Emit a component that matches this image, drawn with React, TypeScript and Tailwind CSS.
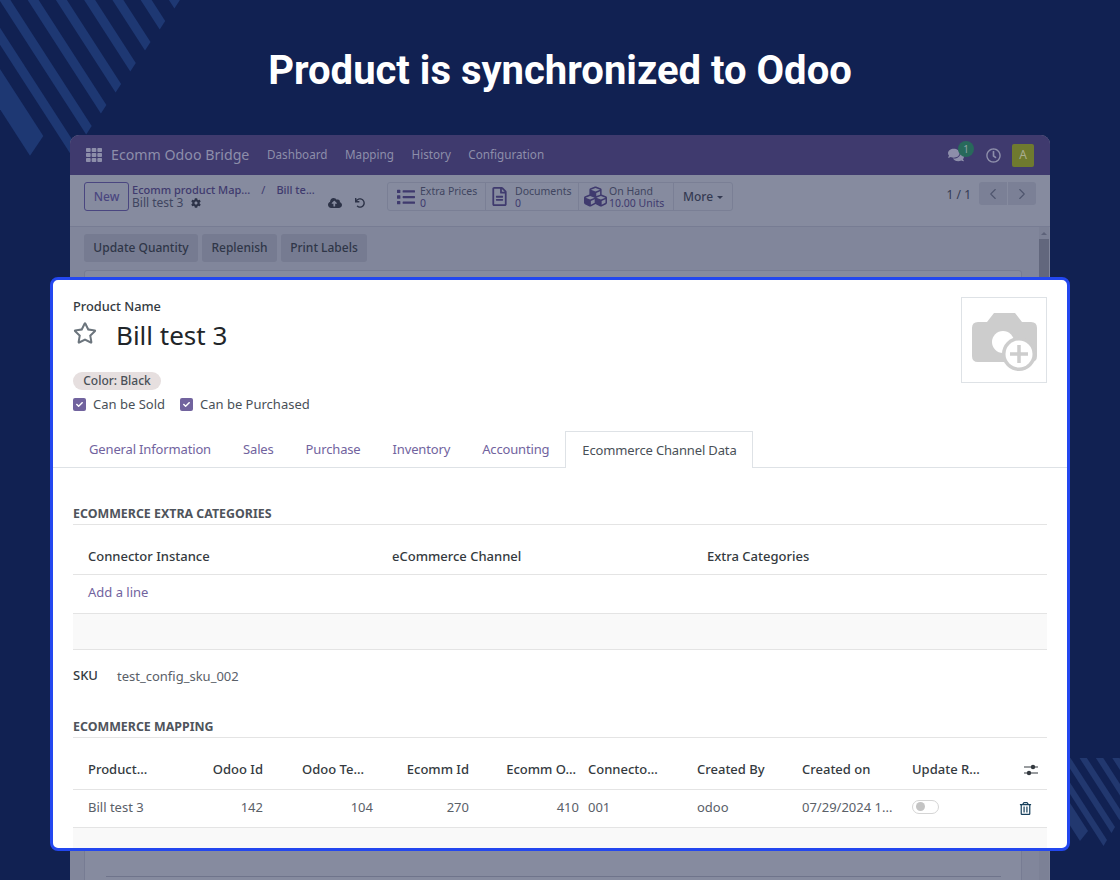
import { ChevronLeft, ChevronRight } from "lucide-react";
import {
  FaCheck,
  FaCloudUploadAlt,
  FaCog,
  FaComments,
  FaCubes,
  FaList,
  FaRegClock,
  FaRegFileAlt,
  FaRegStar,
  FaRegTrashAlt,
  FaTh,
  FaUndo,
} from "react-icons/fa";

const navLinks = ["Dashboard", "Mapping", "History", "Configuration"];
const tabs = ["General Information", "Sales", "Purchase", "Inventory", "Accounting"];

const mappingCols = "grid grid-cols-[95px_95px_110px_96px_110px_118px_105px_110px_100px_35px]";

function stripe(tx: number, ty: number, cx: number, cy: number, len: number) {
  const ux = -len;
  const uy = -len * 1.55;
  return `${tx},${ty} ${tx + cx},${ty + cy} ${tx + cx + ux},${ty + cy + uy} ${tx + ux},${ty + uy}`;
}

function Stripes() {
  const top = [0, 1, 2, 3, 4, 5, 6, 7];
  const low = [0, 1, 2, 3, 4, 5, 6];
  return (
    <>
      <svg className="absolute left-0 top-0" width="190" height="165">
        <g fill="#1e3873">
          {top.map((k) => (
            <polygon key={k} points={stripe(77 + 14.7 * k, 147 - 21 * k, -5.5, 8.5, 110)} />
          ))}
          <polygon points={stripe(43.3, 136, -13.3, 19.7, 110)} />
        </g>
      </svg>
      <svg className="absolute left-[1050px] top-[758px]" width="70" height="90">
        <g fill="#22386f">
          {low.map((k) => (
            <polygon key={k} points={stripe(57 + 8 * k, 82 - 13 * k, -3.5, 6, 100)} />
          ))}
          <polygon points={stripe(38, 73, -8, 10, 100)} />
        </g>
      </svg>
    </>
  );
}

function StatButton({ icon, label, value, cell }: { icon: React.ReactNode; label: string; value: string; cell: string }) {
  return (
    <div className={`flex h-full items-center border-r border-[#7a7f95] ${cell}`}>
      <span className="text-[#3f3a6e]">{icon}</span>
      <div className="text-[10.5px] leading-[12px] text-[#3f4560]">
        <div>{label}</div>
        <div className="text-[#3f3a6e]">{value}</div>
      </div>
    </div>
  );
}

function BackWindow() {
  return (
    <div className="ml-[70px] flex h-[745px] w-[980px] flex-col overflow-hidden rounded-t-[9px] bg-[#81869b]">
      <div className="flex h-[40px] shrink-0 items-center bg-[#3f3a6e] pl-[16px] pr-[16px] text-[#8d8eaa]">
        <FaTh size={16} />
        <span className="ml-[9px] w-[156px] whitespace-nowrap text-[14.2px]">Ecomm Odoo Bridge</span>
        <div className="flex gap-[17.5px] text-[11.7px]">
          {navLinks.map((l) => (
            <span key={l}>{l}</span>
          ))}
        </div>
        <div className="ml-auto flex items-center">
          <div className="relative mr-[22px]">
            <FaComments size={16} />
            <span className="absolute -top-[6px] left-[10px] flex h-[16px] w-[16px] items-center justify-center rounded-full bg-[#28695b] text-[10px] text-[#8fa3a8]">
              1
            </span>
          </div>
          <FaRegClock size={15} className="mr-[11px]" />
          <span className="flex h-[23px] w-[22px] items-center justify-center rounded-[2px] bg-[#6f7a2f] text-[12px] text-[#a9ad8f]">A</span>
        </div>
      </div>

      <div className="flex h-[52px] shrink-0 items-start border-b border-[#777c93] bg-[#868b9f] pl-[14px] pr-[14px] pt-[7px]">
        <div className="flex h-[29px] w-[45px] items-center justify-center rounded-[3px] border border-[#4a4680] text-[12px] font-medium text-[#4a4680]">New</div>
        <div className="ml-[3px] w-[196px] whitespace-nowrap pt-[1px] text-[11px] leading-[13px]">
          <div className="font-medium text-[#3f3a6e]">
            Ecomm product Map...<span className="mx-[11px] font-normal">/</span>Bill te...
          </div>
          <div className="flex items-center text-[12px] text-[#3f4560]">
            Bill test 3 <FaCog size={10} className="ml-[8px] text-[#2d3348]" />
          </div>
        </div>
        <div className="mt-[14px] flex items-center gap-[13px] text-[#2d3348]">
          <FaCloudUploadAlt size={14} />
          <FaUndo size={10} />
        </div>
        <div className="ml-[22px] flex h-[29px] w-[346px] items-center rounded-[3px] border border-[#7a7f95]">
          <StatButton icon={<FaList size={18} />} label="Extra Prices" value="0" cell="w-[98px] gap-[5px] pl-[9px]" />
          <StatButton icon={<FaRegFileAlt size={19} />} label="Documents" value="0" cell="w-[93px] gap-[6px] pl-[4px]" />
          <StatButton icon={<FaCubes size={23} />} label="On Hand" value="10.00 Units" cell="w-[95px] gap-[2px] pl-[5px]" />
          <div className="flex flex-1 items-center justify-center gap-[4px] text-[12px] font-medium text-[#343a52]">
            More <span className="mt-[2px] border-x-[3px] border-t-[3px] border-x-transparent border-t-[#343a52]" />
          </div>
        </div>
        <span className="ml-auto mt-[4px] text-[12px] text-[#343a52]">1 / 1</span>
        <div className="ml-[8px] flex h-[23px] gap-[1px]">
          <span className="flex w-[28px] items-center justify-center rounded-l-[3px] bg-[#7b8096] text-[#4f556e]">
            <ChevronLeft size={18} strokeWidth={1.5} />
          </span>
          <span className="flex w-[28px] items-center justify-center rounded-r-[3px] bg-[#7b8096] text-[#4f556e]">
            <ChevronRight size={18} strokeWidth={1.5} />
          </span>
        </div>
      </div>

      <div className="relative flex-1">
        <div className="ml-[14px] mt-[7px] flex gap-[4px] text-[12px] font-medium text-[#2f3648]">
          <span className="flex h-[28px] w-[114px] items-center justify-center rounded-[3px] bg-[#767b91]">Update Quantity</span>
          <span className="flex h-[28px] w-[75px] items-center justify-center rounded-[3px] bg-[#767b91]">Replenish</span>
          <span className="flex h-[28px] w-[86px] items-center justify-center rounded-[3px] bg-[#767b91]">Print Labels</span>
        </div>
        <div className="ml-[14px] mt-[8px] h-[640px] w-[938px] rounded-t-[3px] border border-[#777c93] bg-[#868b9f] pt-[605px]">
          <div className="ml-[21px] h-px w-[895px] bg-[#6f748b]" />
        </div>
        <div className="absolute bottom-0 right-[1px] top-0 w-[10px] bg-[#7c8196]">
          <div className="mx-auto mt-[5px] h-0 w-0 border-x-[3px] border-b-[3px] border-x-transparent border-b-[#5d6279]" />
          <div className="mt-[4px] h-[100px] bg-[#62677d]" />
        </div>
      </div>
    </div>
  );
}

function CameraIcon() {
  return (
    <svg width="84" height="84" viewBox="1 1 84 84">
      <path d="M26 25 L33 16 H54 L61 25 H70 Q76 25 76 31 V59 Q76 65 70 65 H17 Q11 65 11 59 V31 Q11 25 17 25 Z" fill="#cdcdcd" />
      <circle cx="42" cy="45" r="11" fill="#fff" />
      <circle cx="58" cy="57" r="17" fill="#cdcdcd" />
      <circle cx="58" cy="57" r="13.5" fill="#fff" />
      <path d="M58 48 V66 M49 57 H67" stroke="#cdcdcd" strokeWidth="3.5" />
    </svg>
  );
}

function AdjustIcon() {
  return (
    <svg width="14" height="12" viewBox="0 0 14 12" fill="#343a40">
      <rect x="0" y="2.5" width="14" height="1" />
      <rect x="0" y="8.5" width="14" height="1" />
      <circle cx="9" cy="3" r="2.2" />
      <circle cx="5" cy="9" r="2.2" />
    </svg>
  );
}

function Checkbox({ label }: { label: string }) {
  return (
    <div className="flex items-center gap-[7px]">
      <span className="flex h-[13px] w-[13px] items-center justify-center rounded-[2px] bg-[#71639e] text-white">
        <FaCheck size={7} />
      </span>
      <span className="text-[13px] text-[#495057]">{label}</span>
    </div>
  );
}

function SectionTitle({ children }: { children: string }) {
  return <div className="border-b border-[#e4e4e4] pb-[2px] text-[12.4px] font-bold leading-[16px] text-[#4f545c]">{children}</div>;
}

function Card() {
  return (
    <div className="absolute left-[50px] top-[277px] h-[574px] w-[1020px] overflow-hidden rounded-[8px] border-[3px] border-[#2347ef] bg-white">
      <div className="relative h-[151px] px-[20px] pt-[18px]">
        <div className="text-[12.8px] font-medium leading-[17px] text-[#343a40]">Product Name</div>
        <div className="flex items-center">
          <FaRegStar size={24} className="-mt-[2px] text-[#6c757d]" />
          <span className="ml-[19px] pt-[2px] text-[26px] leading-[36px] text-[#212529]">Bill test 3</span>
        </div>
        <div className="mt-[19px] flex h-[18px] w-[88px] items-center justify-center rounded-full bg-[#e6dfdf] text-[12px] font-medium text-[#495057]">Color: Black</div>
        <div className="mt-[5px] flex gap-[15px]">
          <Checkbox label="Can be Sold" />
          <Checkbox label="Can be Purchased" />
        </div>
        <div className="absolute right-[20px] top-[17px] flex h-[86px] w-[86px] items-center justify-center border border-[#dee2e6]">
          <CameraIcon />
        </div>
      </div>

      <div className="flex h-[37px] border-b border-[#dee2e6] pl-[20px] text-[13px] tracking-[-0.15px] text-[#71639e]">
        {tabs.map((t) => (
          <span key={t} className="flex items-center px-[16px] pt-[2px]">
            {t}
          </span>
        ))}
        <span className="-mb-px flex w-[188px] items-center justify-center border-x border-t border-[#dee2e6] bg-white pt-[1px] text-[#495057]">Ecommerce Channel Data</span>
      </div>

      <div className="px-[20px] pt-[38px]">
        <SectionTitle>ECOMMERCE EXTRA CATEGORIES</SectionTitle>
        <div className="grid h-[50px] grid-cols-[304px_315px_1fr] items-center border-b border-[#e4e4e4] pl-[15px] pt-[15px] text-[13px] font-medium text-[#343a40]">
          <span>Connector Instance</span>
          <span>eCommerce Channel</span>
          <span>Extra Categories</span>
        </div>
        <div className="flex h-[39px] items-center border-b border-[#e4e4e4] pb-[3px] pl-[15px] text-[13px] text-[#71639e]">Add a line</div>
        <div className="h-[36px] border-b border-[#e4e4e4] bg-[#f9f9f9]" />
        <div className="mt-[14px] flex items-center">
          <span className="w-[44px] text-[13px] font-medium text-[#343a40]">SKU</span>
          <span className="mt-[3px] text-[13px] text-[#5a6068]">test_config_sku_002</span>
        </div>
        <div className="mt-[32px]">
          <SectionTitle>ECOMMERCE MAPPING</SectionTitle>
        </div>
        <div className={`${mappingCols} h-[52px] items-center border-b border-[#e4e4e4] pt-[14px] text-[13px] font-medium text-[#343a40]`}>
          <span className="pl-[15px]">Product...</span>
          <span className="text-right">Odoo Id</span>
          <span className="pr-[9px] text-right">Odoo Te...</span>
          <span className="text-right">Ecomm Id</span>
          <span className="pr-[3px] text-right">Ecomm O...</span>
          <span className="pl-[9px]">Connecto...</span>
          <span>Created By</span>
          <span>Created on</span>
          <span>Update R...</span>
          <span className="flex justify-end pr-[9px]">
            <AdjustIcon />
          </span>
        </div>
        <div className={`${mappingCols} h-[38px] items-center border-b border-[#e4e4e4] text-[13px] text-[#5a6068]`}>
          <span className="pl-[15px]">Bill test 3</span>
          <span className="text-right">142</span>
          <span className="text-right">104</span>
          <span className="text-right">270</span>
          <span className="text-right">410</span>
          <span className="pl-[9px]">001</span>
          <span>odoo</span>
          <span className="whitespace-nowrap">07/29/2024 1...</span>
          <span className="flex">
            <span className="mb-[3px] flex h-[14px] w-[27px] items-center rounded-full border border-[#d5d5d5] pl-[3px]">
              <span className="h-[9px] w-[9px] rounded-full bg-[#c4c4c4]" />
            </span>
          </span>
          <span className="flex justify-end pr-[15px]">
            <FaRegTrashAlt size={13} className="text-[#17405c]" />
          </span>
        </div>
        <div className="h-[30px] bg-[#f9f9f9]" />
      </div>
    </div>
  );
}

export default function App() {
  return (
    <div className="relative h-[880px] w-[1120px] overflow-hidden bg-[#112152] font-['Noto_Sans',sans-serif]">
      <Stripes />
      <div className="relative flex h-[135px] items-start justify-center pt-[47px]">
        <h1 className="font-['Roboto',sans-serif] text-[40px] font-bold leading-[48px] text-white">Product is synchronized to Odoo</h1>
      </div>
      <div className="relative">
        <BackWindow />
      </div>
      <Card />
    </div>
  );
}
